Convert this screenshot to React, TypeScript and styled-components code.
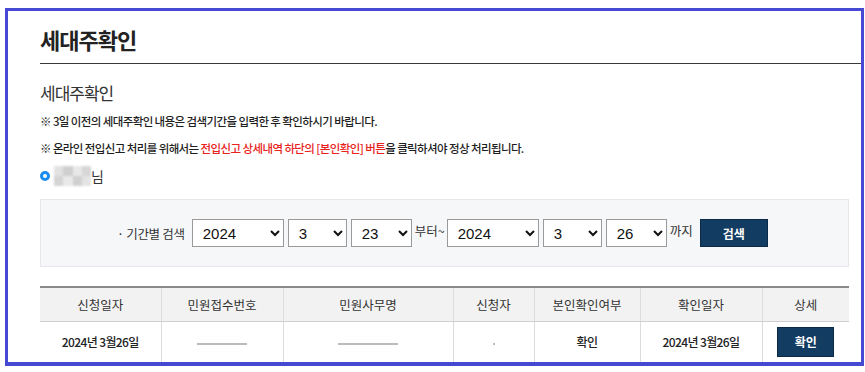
import React from "react";
import styled, { createGlobalStyle } from "styled-components";

const Global = createGlobalStyle`
  html, body { margin: 0; padding: 0; background: #fff; }
  body { font-family: "Noto Sans CJK KR", "Noto Sans", sans-serif; color: #333; }
  * { box-sizing: border-box; }
`;

const Page = styled.div`
  padding: 8px 1px 0 5px;
  width: 865px;
  height: 372px;
  overflow: hidden;
`;

const Frame = styled.div`
  width: 859px;
  height: 358px;
  border: 3px solid #4649d2;
  border-bottom-width: 4px;
  overflow: hidden;
  padding-left: 32px;
`;

const TitleBar = styled.div`
  height: 53px;
  border-bottom: 1px solid #3a3a3a;
  display: flex;
  align-items: flex-end;
  padding-bottom: 9px;
`;

const Title = styled.h1`
  margin: 0;
  font-size: 22px;
  font-weight: 700;
  letter-spacing: -1px;
  color: #222;
  line-height: 30px;
`;

const Content = styled.div`
  padding-right: 12px;
`;

const SubTitle = styled.h2`
  margin: 18px 0 0;
  font-size: 17px;
  font-weight: 400;
  letter-spacing: -1px;
  color: #333;
  line-height: 22px;
`;

const Note = styled.p<{ $gap: number }>`
  margin: ${(p) => p.$gap}px 0 0;
  font-size: 11.5px;
  letter-spacing: -0.6px;
  line-height: 16px;
  color: #1e1e1e;
  font-weight: 500;
`;

const Red = styled.span`
  color: #e8231c;
`;

const NameRow = styled.div`
  margin-top: 10px;
  height: 20px;
  display: flex;
  align-items: center;
  font-size: 14px;
  color: #333;
`;

const Radio = styled.span`
  width: 10px;
  height: 10px;
  border-radius: 50%;
  border: 3px solid #1b8cf0;
  margin-right: 4px;
`;

const Mosaic = styled.span`
  width: 37px;
  height: 20px;
  display: grid;
  grid-template-columns: repeat(4, 1fr);
  grid-template-rows: repeat(2, 1fr);
  filter: blur(1px);
`;

const Tile = styled.span<{ $c: string }>`
  background: ${(p) => p.$c};
`;

const SearchBox = styled.div`
  margin-top: 13px;
  height: 68px;
  background: #f6f7f9;
  border: 1px solid #e6e7ea;
  display: flex;
  align-items: center;
  justify-content: flex-start;
  gap: 4px;
  padding-left: 76px;
`;

const Label = styled.span`
  font-size: 12.5px;
  color: #333;
  margin-right: 3px;
  letter-spacing: -0.3px;
`;

const Select = styled.select<{ $w: number }>`
  width: ${(p) => p.$w}px;
  height: 28px;
  border: 1px solid #9a9a9a;
  background: #fff;
  font-family: "Liberation Sans", Arial, sans-serif;
  font-size: 15px;
  color: #111;
  padding: 0 4px 0 6px;
  border-radius: 0;
`;

const Word = styled.span`
  font-size: 12.5px;
  color: #333;
  margin: 0 -2px 6px -1px;
  letter-spacing: 0;
`;

const DarkButton = styled.button<{ $w: number; $h: number }>`
  width: ${(p) => p.$w}px;
  height: ${(p) => p.$h}px;
  background: #133c62;
  color: #fff;
  border: 1px solid #0b2a48;
  font-family: "Noto Sans CJK KR", sans-serif;
  font-size: 12px;
  font-weight: 700;
  padding: 0;
`;

const SearchButton = styled(DarkButton)`
  margin-left: 5px;
`;

const Table = styled.table`
  margin-top: 19px;
  width: 809px;
  border-collapse: collapse;
  border-top: 2px solid #8a8a8a;
  table-layout: fixed;
`;

const Th = styled.th<{ $w: number }>`
  width: ${(p) => p.$w}px;
  height: 34px;
  background: #f2f2f2;
  font-size: 12.5px;
  font-weight: 400;
  color: #333;
  border-bottom: 1px solid #cfcfcf;
  border-left: 1px solid #dcdcdc;
  &:first-child { border-left: none; }
`;

const Td = styled.td`
  height: 41px;
  text-align: center;
  font-size: 12px;
  letter-spacing: -0.6px;
  color: #222;
  font-weight: 500;
  border-left: 1px solid #dcdcdc;
  &:first-child { border-left: none; }
`;

const Smudge = styled.span<{ $w: number }>`
  display: inline-block;
  width: ${(p) => p.$w}px;
  height: 2px;
  background: #bbb;
  filter: blur(0.6px);
  vertical-align: middle;
`;

const cols = [
  ["신청일자", 121],
  ["민원접수번호", 122],
  ["민원사무명", 170],
  ["신청자", 81],
  ["본인확인여부", 106],
  ["확인일자", 122],
  ["상세", 87],
] as const;

const years = ["2024", "2023", "2022"];
const months = Array.from({ length: 12 }, (_, i) => String(i + 1));
const days = Array.from({ length: 31 }, (_, i) => String(i + 1));

function DateSelects({ y, m, d }: { y: string; m: string; d: string }) {
  return (
    <>
      <Select $w={92} defaultValue={y}>
        {years.map((v) => (
          <option key={v}>{v}</option>
        ))}
      </Select>
      <Select $w={59} defaultValue={m}>
        {months.map((v) => (
          <option key={v}>{v}</option>
        ))}
      </Select>
      <Select $w={61} defaultValue={d}>
        {days.map((v) => (
          <option key={v}>{v}</option>
        ))}
      </Select>
    </>
  );
}

const tiles = ["#e2e2e2", "#cfcfcf", "#e8e8e8", "#d6d6d6", "#d4d4d4", "#e9e9e9", "#d0d0d0", "#e4e4e4"];

export default function App() {
  return (
    <Page>
      <Global />
      <Frame>
        <TitleBar>
          <Title>세대주확인</Title>
        </TitleBar>
        <Content>
          <SubTitle>세대주확인</SubTitle>
          <Note $gap={9}>※ 3일 이전의 세대주확인 내용은 검색기간을 입력한 후 확인하시기 바랍니다.</Note>
          <Note $gap={11}>
            ※ 온라인 전입신고 처리를 위해서는 <Red>전입신고 상세내역 하단의 [본인확인] 버튼</Red>을 클릭하셔야 정상 처리됩니다.
          </Note>
          <NameRow>
            <Radio />
            <Mosaic>
              {tiles.map((c, i) => (
                <Tile key={i} $c={c} />
              ))}
            </Mosaic>
            님
          </NameRow>
          <SearchBox>
            <Label>· 기간별 검색</Label>
            <DateSelects y="2024" m="3" d="23" />
            <Word>부터~</Word>
            <DateSelects y="2024" m="3" d="26" />
            <Word>까지</Word>
            <SearchButton $w={68} $h={28}>검색</SearchButton>
          </SearchBox>
          <Table>
            <thead>
              <tr>
                {cols.map(([t, w]) => (
                  <Th key={t} $w={w}>
                    {t}
                  </Th>
                ))}
              </tr>
            </thead>
            <tbody>
              <tr>
                <Td>2024년 3월26일</Td>
                <Td>
                  <Smudge $w={50} />
                </Td>
                <Td>
                  <Smudge $w={60} />
                </Td>
                <Td>
                  <Smudge $w={2} />
                </Td>
                <Td>확인</Td>
                <Td>2024년 3월26일</Td>
                <Td>
                  <DarkButton $w={57} $h={30}>확인</DarkButton>
                </Td>
              </tr>
            </tbody>
          </Table>
        </Content>
      </Frame>
    </Page>
  );
}
